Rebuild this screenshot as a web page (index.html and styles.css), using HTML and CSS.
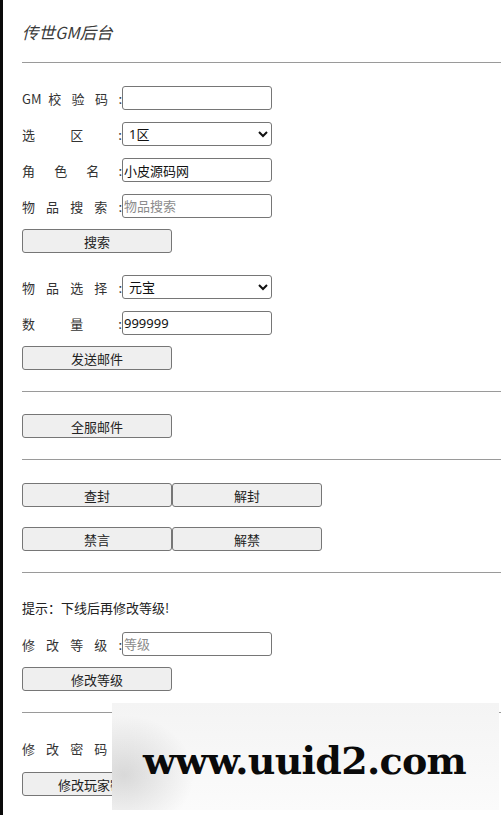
FILE: index.html
```html
<!DOCTYPE html>
<html lang="zh-CN">
<head>
<meta charset="utf-8">
<title>传世GM后台</title>
<link rel="stylesheet" href="styles.css">
</head>
<body>
<div class="page">
  <h1 class="title">传世GM后台</h1>
  <hr class="rule">
  <section class="section">
    <div class="field"><label class="label">GM 校 验 码 :</label><input class="control" type="text"></div>
    <div class="field"><label class="label">选 区 :</label><select class="control select"><option>1区</option></select></div>
    <div class="field"><label class="label">角 色 名 :</label><input class="control" type="text" value="小皮源码网"></div>
    <div class="field"><label class="label">物 品 搜 索 :</label><input class="control" type="text" placeholder="物品搜索"></div>
    <div class="actions"><button class="btn">搜索</button></div>
    <div class="field group-start"><label class="label">物 品 选 择 :</label><select class="control select"><option>元宝</option></select></div>
    <div class="field"><label class="label">数 量 :</label><input class="control" type="text" value="999999"></div>
    <div class="actions"><button class="btn">发送邮件</button></div>
  </section>
  <hr class="rule">
  <section class="section compact">
    <div class="actions first"><button class="btn">全服邮件</button></div>
  </section>
  <hr class="rule">
  <section class="section">
    <div class="actions first pair"><button class="btn">查封</button><button class="btn">解封</button></div>
    <div class="actions pair spaced"><button class="btn">禁言</button><button class="btn">解禁</button></div>
  </section>
  <hr class="rule">
  <section class="section">
    <div class="note">提示：下线后再修改等级!</div>
    <div class="field"><label class="label">修 改 等 级 :</label><input class="control" type="text" placeholder="等级"></div>
    <div class="actions"><button class="btn">修改等级</button></div>
  </section>
  <hr class="rule">
  <section class="section">
    <div class="field"><label class="label">修 改 密 码 :</label><input class="control" type="text" placeholder="密码"></div>
    <div class="actions tall"><button class="btn">修改玩家密码</button></div>
  </section>
  <div class="watermark"><span class="watermark-text">www.uuid2.com</span></div>
</div>
</body>
</html>
```
FILE: styles.css
```css
html, body {
  margin: 0;
  padding: 0;
  background: #fff;
}

body {
  font-family: "Noto Sans", "Noto Sans CJK SC", sans-serif;
  font-size: 13px;
  color: #222;
}

.page {
  position: relative;
  min-height: 815px;
  border-left: 3px solid #0a0a0a;
  padding-left: 19px;
  box-sizing: border-box;
  overflow: hidden;
}

.title {
  margin: 0;
  padding-top: 21px;
  font-size: 16.5px;
  line-height: 22px;
  font-weight: normal;
  font-style: italic;
  color: #3a3a3a;
  font-family: "Noto Sans CJK SC", sans-serif;
}

.rule {
  margin: 19px 0 0 0;
  border: 0;
  border-top: 1px solid #9a9a9a;
  height: 0;
}

.section + .rule {
  margin-top: 0;
}

.section {
  display: flex;
  flex-direction: column;
  align-items: flex-start;
  padding: 23px 0 21px 0;
}

.section.compact {
  padding-top: 22px;
}

.field {
  display: flex;
  align-items: center;
  height: 24px;
  margin-top: 12px;
}

.section > .field:first-child,
.actions.first {
  margin-top: 0;
}

.field.group-start {
  margin-top: 22px;
}

.label {
  display: inline-block;
  width: 100px;
  text-align: justify;
  text-align-last: justify;
  white-space: nowrap;
  color: #333;
  font-family: "Noto Sans CJK SC", sans-serif;
}

.control {
  width: 150px;
  height: 24px;
  box-sizing: border-box;
  margin: 0;
  padding: 0 1px;
  border: 1px solid #767676;
  border-radius: 3px;
  font-family: "Noto Sans", "Noto Sans CJK SC", sans-serif;
  font-size: 13px;
  color: #111;
  background: #fff;
}

.control::placeholder {
  color: #8c8c8c;
}

.select {
  padding-left: 2px;
}

.actions {
  display: flex;
  margin-top: 11px;
}

.actions.spaced {
  margin-top: 20px;
}

.actions.tall {
  margin-top: 12px;
}

.btn {
  width: 150px;
  height: 24px;
  box-sizing: border-box;
  margin: 0;
  padding: 0;
  border: 1px solid #767676;
  border-radius: 3px;
  background: #efefef;
  font-family: "Noto Sans CJK SC", sans-serif;
  font-size: 13px;
  color: #222;
}

.note {
  height: 24px;
  line-height: 24px;
  color: #222;
  font-family: "Noto Sans CJK SC", sans-serif;
}

.watermark {
  position: absolute;
  left: 109px;
  top: 703px;
  width: 387px;
  height: 107px;
  box-sizing: border-box;
  padding-top: 8px;
  background:
    radial-gradient(ellipse 70px 60px at 12px 72px, rgba(0,0,0,0.13), rgba(0,0,0,0) 100%),
    linear-gradient(180deg, #f4f4f4 0%, #f8f8f8 60%, #fbfbfb 100%);
  display: flex;
  align-items: center;
}

.watermark-text {
  margin-left: 31px;
  font-family: "DejaVu Serif", "Liberation Serif", serif;
  font-weight: bold;
  font-size: 38px;
  color: #0a0a0a;
  letter-spacing: -0.7px;
}
```
